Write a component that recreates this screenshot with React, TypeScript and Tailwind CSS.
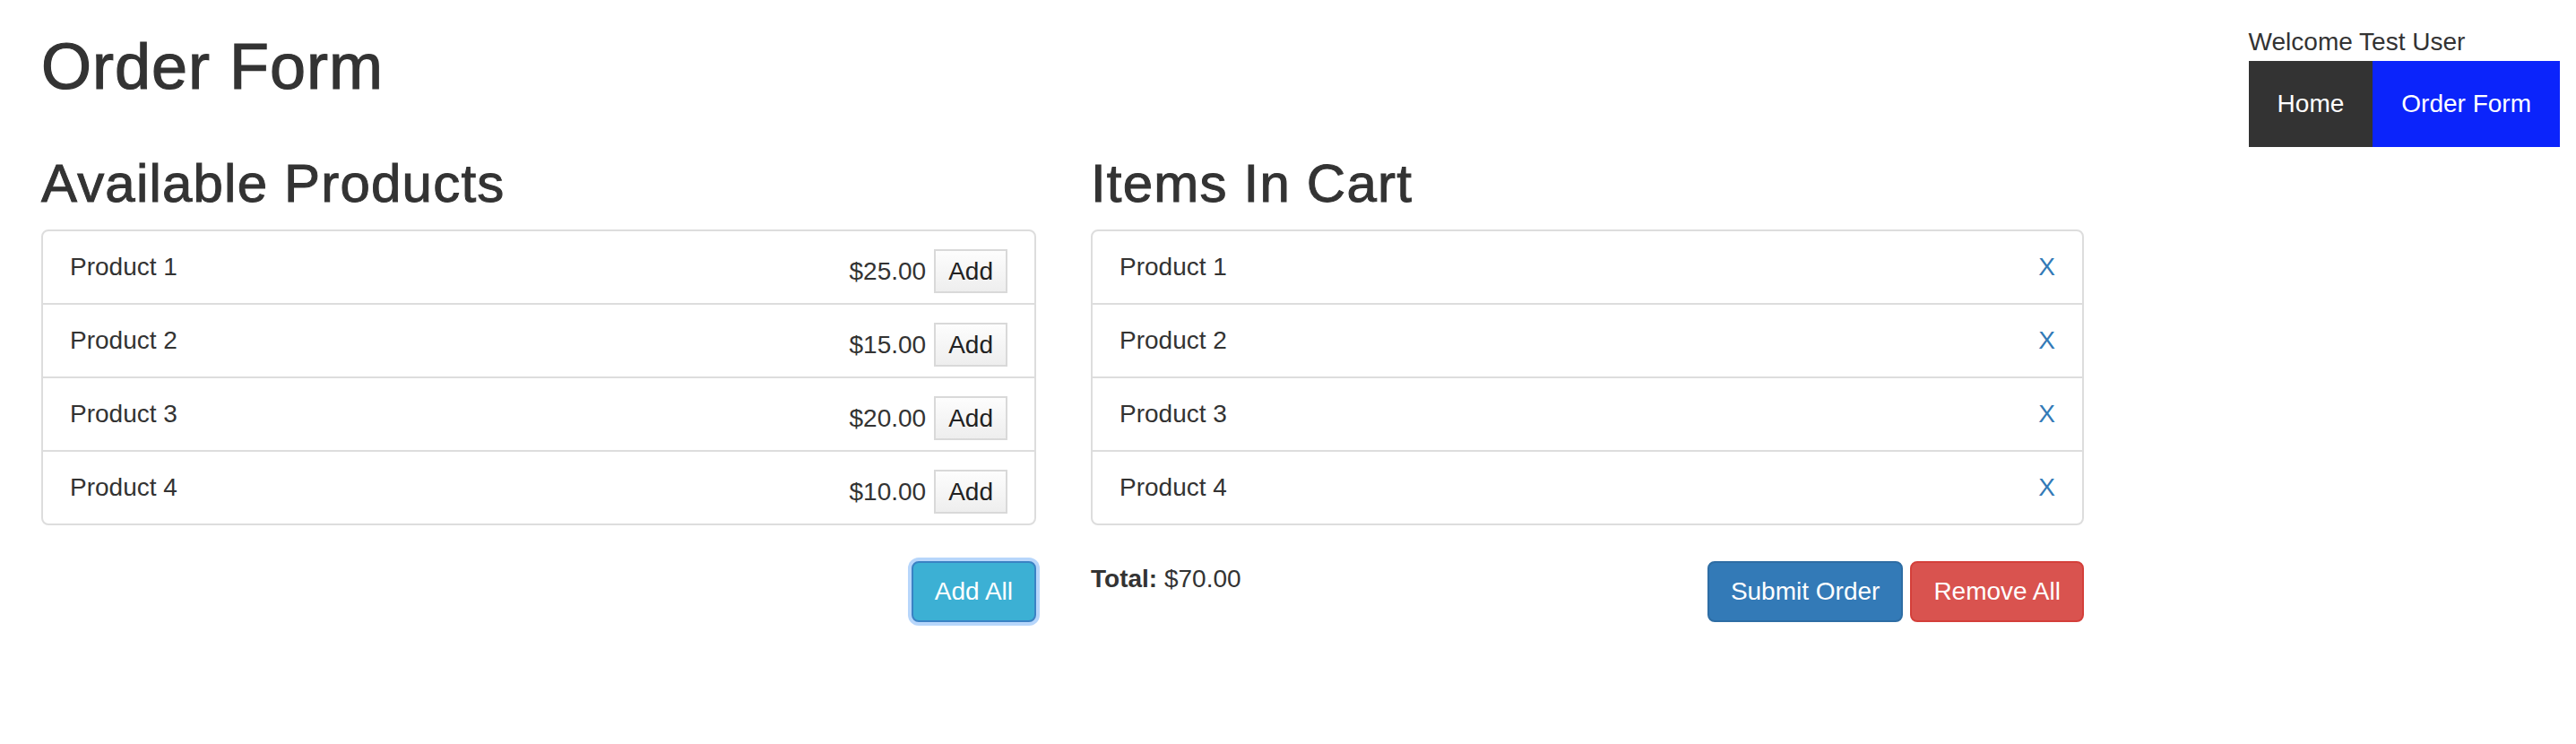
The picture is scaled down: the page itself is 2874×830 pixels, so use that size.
import React from 'react'

type Product = { name: string; price: number }

const products: Product[] = [
  { name: 'Product 1', price: 25 },
  { name: 'Product 2', price: 15 },
  { name: 'Product 3', price: 20 },
  { name: 'Product 4', price: 10 },
]

const money = (n: number) => `$${n.toFixed(2)}`

function ListRow({ children, first }: { children: React.ReactNode; first?: boolean }) {
  return (
    <li
      className={`flex items-start justify-between px-[30px] pt-[20px] ${
        first ? 'h-[80px]' : 'h-[82px] border-t-2 border-[#dddddd]'
      }`}
    >
      {children}
    </li>
  )
}

export default function App() {
  const total = products.reduce((sum, p) => sum + p.price, 0)

  return (
    <div
      className="flex h-[830px] w-full items-start justify-between bg-white text-[28px] leading-[40px] text-[#333333]"
      style={{ fontFamily: '"Liberation Sans", Arial, sans-serif' }}
    >
      <div className="pl-[46px]">
        <h1 className="pt-[34px] text-[72px] leading-[80px] font-normal tracking-[1px] [-webkit-text-stroke:1.2px_#333333]">
          Order Form
        </h1>

        <div className="mt-[58px] flex gap-[61px]">
          {/* available products */}
          <section className="w-[1110px]">
            <h2 className="text-[60px] leading-[66px] font-normal tracking-[1.2px] [-webkit-text-stroke:1px_#333333]">
              Available Products
            </h2>
            <ul className="mt-[18px] rounded-[8px] border-2 border-[#dddddd]">
              {products.map((p, i) => (
                <ListRow key={p.name} first={i === 0}>
                  <span>{p.name}</span>
                  <div className="flex h-[49px] items-center gap-[9px]">
                    <span>{money(p.price)}</span>
                    <button className="flex h-[49px] items-center border-2 border-[#d9d9d9] bg-gradient-to-b from-[#fdfdfd] to-[#eeeeee] px-[14px] leading-[32px] text-[#222222]">
                      Add
                    </button>
                  </div>
                </ListRow>
              ))}
            </ul>
            <div className="mt-[40px] flex justify-end">
              <button className="rounded-[8px] border-2 border-[#3a82c4] bg-[#3cb0d4] px-[24px] py-[12px] text-white shadow-[0_0_0_4px_#b7d6fb]">
                Add All
              </button>
            </div>
          </section>

          {/* cart */}
          <section className="w-[1108px]">
            <h2 className="text-[60px] leading-[66px] font-normal tracking-[1.2px] [-webkit-text-stroke:1px_#333333]">
              Items In Cart
            </h2>
            <ul className="mt-[18px] rounded-[8px] border-2 border-[#dddddd]">
              {products.map((p, i) => (
                <ListRow key={p.name} first={i === 0}>
                  <span>{p.name}</span>
                  <a className="cursor-pointer text-[#337ab7]">X</a>
                </ListRow>
              ))}
            </ul>
            <div className="mt-[40px] flex items-start justify-between">
              <p>
                <b>Total:</b> {money(total)}
              </p>
              <div className="flex gap-[8px]">
                <button className="rounded-[8px] border-2 border-[#2e6da4] bg-[#337ab7] px-[24px] py-[12px] text-white">
                  Submit Order
                </button>
                <button className="rounded-[8px] border-2 border-[#d43f3a] bg-[#d9534f] px-[24px] py-[12px] text-white">
                  Remove All
                </button>
              </div>
            </div>
          </section>
        </div>
      </div>

      {/* top right nav */}
      <div className="pt-[27px] pr-[18px]">
        <p>Welcome Test User</p>
        <nav className="mt-px flex text-white">
          <a className="bg-[#333333] px-[32px] py-[28px]">Home</a>
          <a className="bg-[#0b24fb] px-[32px] py-[28px]">Order Form</a>
        </nav>
      </div>
    </div>
  )
}
